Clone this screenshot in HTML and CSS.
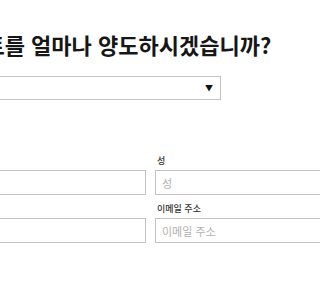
FILE: index.html
```html
<!DOCTYPE html>
<html lang="ko">
<head>
<meta charset="utf-8">
<link rel="stylesheet" href="styles.css">
</head>
<body>
<div class="page">
  <h1 class="title">포인트를 얼마나 양도하시겠습니까?</h1>
  <div class="select">
    <span class="select-value"></span>
    <span class="arrow">▼</span>
  </div>
  <div class="fields">
    <div class="field">
      <label class="label">이름</label>
      <input class="input" placeholder="이름">
    </div>
    <div class="field">
      <label class="label">성</label>
      <input class="input" placeholder="성">
    </div>
    <div class="field">
      <label class="label">전화번호</label>
      <input class="input" placeholder="전화번호">
    </div>
    <div class="field">
      <label class="label">이메일 주소</label>
      <input class="input" placeholder="이메일 주소">
    </div>
  </div>
</div>
</body>
</html>
```
FILE: styles.css
```css
html, body {
  margin: 0;
  padding: 0;
  background: #fff;
  overflow: hidden;
}
body {
  font-family: "Noto Sans CJK KR", "Noto Sans", sans-serif;
  color: #1a1a1a;
}
.page {
  margin-left: -100px;
  width: 520px;
  padding-top: 31px;
}
.title {
  margin: 0 0 0 44px;
  font-size: 22px;
  line-height: 26px;
  font-weight: 700;
  color: #161616;
  white-space: nowrap;
}
.select {
  margin-top: 19px;
  width: 321px;
  height: 24px;
  box-sizing: border-box;
  border: 1px solid #c4c4c4;
  display: flex;
  align-items: center;
  justify-content: space-between;
  padding-right: 7px;
}
.arrow {
  font-size: 8px;
  line-height: 8px;
  color: #111;
}
.fields {
  margin-top: 55px;
  display: grid;
  grid-template-columns: 246px 246px;
  column-gap: 9px;
  row-gap: 8px;
}
.field {
  display: flex;
  flex-direction: column;
  align-items: flex-start;
}
.label {
  font-size: 9px;
  line-height: 12px;
  font-weight: 500;
  color: #333;
  margin-bottom: 3px;
  padding-left: 2px;
}
.input {
  width: 100%;
  height: 25px;
  box-sizing: border-box;
  border: 1px solid #c4c4c4;
  padding: 0 6px;
  margin: 0;
  font-family: "Noto Sans CJK KR", "Noto Sans", sans-serif;
  font-size: 11px;
  color: #333;
  outline: none;
  border-radius: 0;
}
.input::placeholder {
  color: #b0b0b0;
}
```
